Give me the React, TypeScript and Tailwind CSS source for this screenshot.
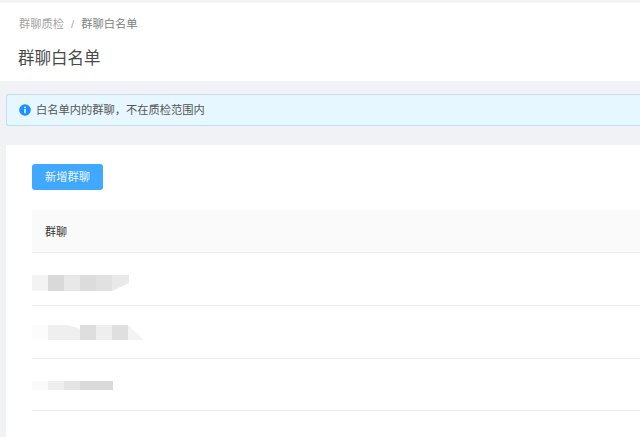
const font = { fontFamily: '"Liberation Sans", "Noto Sans CJK SC", sans-serif' };

function Blur({ cells, h }: { cells: [number, string, string?][]; h: string }) {
  return (
    <div className={`flex ${h}`}>
      {cells.map(([w, c, k], i) => (
        <div key={i} className={k} style={{ width: w, background: c }} />
      ))}
    </div>
  );
}

export default function App() {
  return (
    <div className="w-[640px] h-[437px] overflow-hidden bg-[#f0f2f5] text-[#333]" style={font}>
      <div className="h-[81px] bg-white border-t-[3px] border-[#f3f3f3]">
        <div className="flex items-center gap-[7px] pl-[19px] pt-[13px] text-[11.25px] leading-[17px]">
          <span className="text-[#a3a3a3]">群聊质检</span>
          <span className="text-[#aaa]">/</span>
          <span className="text-[#808080]">群聊白名单</span>
        </div>
        <div className="pl-[18px] pt-[13px] text-[16.5px] leading-[24px] text-[#4a4a4a]">群聊白名单</div>
      </div>
      <div className="pl-[6px] pt-[13px]">
        <div className="h-[32px] flex items-center gap-[5px] pl-[12px] bg-[#e6f7ff] border border-[#bfdfee] border-r-0 rounded-l-[3px] text-[11.25px] text-[#555]">
          <svg width="12" height="12" viewBox="0 0 12 12" className="shrink-0">
            <circle cx="6" cy="6" r="5.8" fill="#1890ff" />
            <rect x="5.3" y="2.6" width="1.4" height="1.4" fill="#fff" />
            <rect x="5.3" y="4.8" width="1.4" height="4.4" fill="#fff" />
          </svg>
          <span>白名单内的群聊，不在质检范围内</span>
        </div>
        <div className="mt-[19px] bg-white h-[292px] pl-[26px] pt-[19px]">
          <button className="block w-[71px] h-[26px] rounded-[3px] bg-[#40a9ff] text-[#eaf6ff] text-[11.25px]">新增群聊</button>
          <div className="mt-[20px] h-[43px] flex items-center pl-[13px] pt-[2px] bg-[#fafafa] border-b border-[#ececec] text-[11px] text-[#333]">群聊</div>
          <div className="h-[53px] border-b border-[#ececec] pt-[22px]">
            <Blur h="h-[16px]" cells={[[16, "#f3f3f3"], [16, "#d9d9d9"], [16, "#e8e8e8"], [16, "#dcdcdc"], [16, "#e1e1e1"], [17, "#e9e9e9", "[clip-path:polygon(0_0,100%_0,100%_50%,0_100%)]"]]} />
          </div>
          <div className="h-[53px] border-b border-[#ececec] pt-[19px]">
            <Blur h="h-[15px]" cells={[[16, "#fcfcfc"], [32, "#efefef", "[clip-path:polygon(0_0,60%_0,100%_25%,100%_100%,0_100%)]"], [16, "#dedede"], [16, "#eeeeee"], [16, "#dfdfdf"], [16, "#f4f4f4", "[clip-path:polygon(0_0,100%_100%,0_100%)]"]]} />
          </div>
          <div className="h-[52px] border-b border-[#ececec] pt-[22px]">
            <Blur h="h-[9px]" cells={[[16, "#fafafa"], [16, "#eeeeee"], [16, "#e4e4e4"], [33, "#d9d9d9"]]} />
          </div>
        </div>
      </div>
    </div>
  );
}
